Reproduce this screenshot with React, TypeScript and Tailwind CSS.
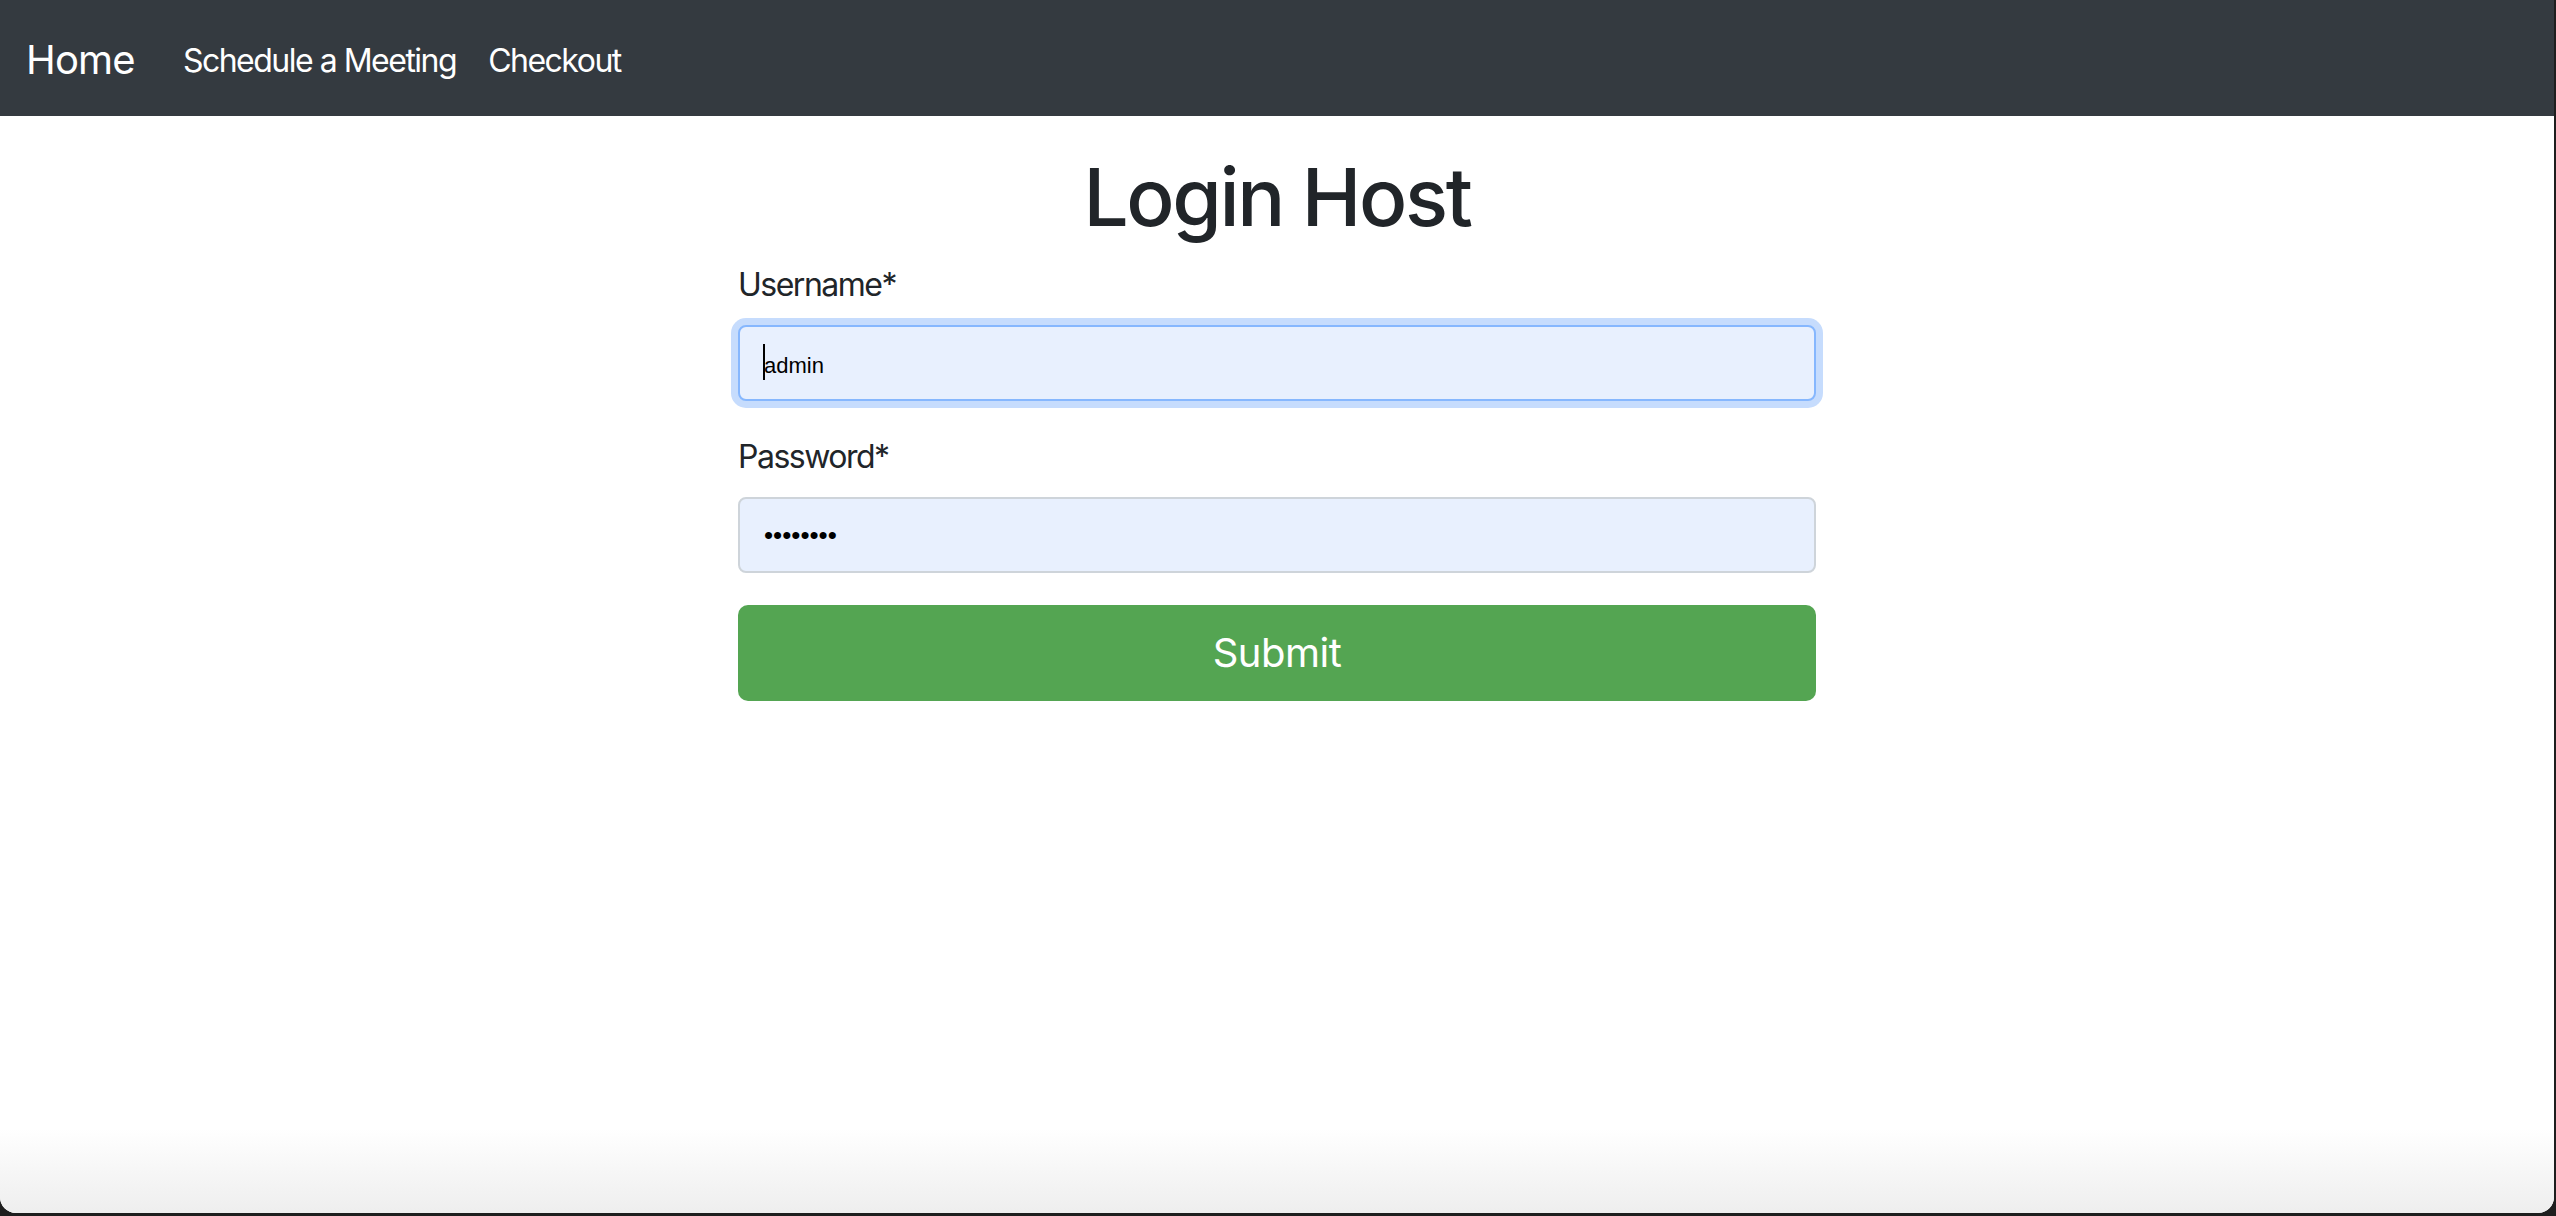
import React from 'react';

const App: React.FC = () => {
  return (
    <div className="h-[1216px] w-full bg-[#1e1e1e] pr-[2px] pb-[3px]">
      <div className="relative flex h-full flex-col overflow-hidden rounded-b-[16px] bg-white font-['Inter',sans-serif] text-[#212529]">
        {/* navbar */}
        <nav className="flex h-[116px] shrink-0 items-center bg-[#343a40] px-[26px]">
          <div className="flex items-center text-white">
            <a href="#" className="mr-[32px] pt-[4px] text-[40px] leading-[60px] tracking-[-0.8px]">Home</a>
            <a href="#" className="px-4 pt-[6px] text-[32px] leading-[48px] tracking-[-1.5px]">Schedule a Meeting</a>
            <a href="#" className="px-4 pt-[6px] text-[32px] leading-[48px] tracking-[-1.5px]">Checkout</a>
          </div>
        </nav>

        <main className="mx-auto w-[1078px]">
          <h1 className="mt-[33px] mb-4 text-center text-[80px] leading-[96px] font-medium tracking-[-2.4px]">Login Host</h1>

          <form onSubmit={(e) => e.preventDefault()}>
            <div className="mb-8">
              <label className="mb-4 block text-[32px] leading-[48px] tracking-[-1.5px]">Username*</label>
              <div className="relative">
                <input
                  type="text"
                  defaultValue="admin"
                  className="h-[76px] w-full rounded-[8px] border-2 border-[#86b7fe] bg-[#e8f0fe] px-[24px] pt-[5px] font-['Liberation_Sans',Arial,sans-serif] text-[22px] text-black shadow-[0_0_0_7px_#c6dcfd] outline-none"
                />
                <span className="absolute top-[19px] left-[25px] h-[36px] w-[2px] bg-black" />
              </div>
            </div>

            <div className="mb-8">
              <label className="mb-4 block text-[32px] leading-[48px] tracking-[-1.5px]">Password*</label>
              <input
                type="password"
                defaultValue="password"
                className="h-[76px] w-full rounded-[8px] border-2 border-[#ced4da] bg-[#e8f0fe] px-[24px] font-['Liberation_Sans',Arial,sans-serif] text-[26px] text-black outline-none"
              />
            </div>

            <button
              type="submit"
              className="h-[96px] w-full rounded-[10px] bg-[#54a552] text-[40px] leading-[60px] tracking-[-0.5px] text-white"
            >
              Submit
            </button>
          </form>
        </main>

        <div className="mt-auto h-[84px] bg-linear-to-b from-white to-[#eeeeee]" />
      </div>
    </div>
  );
};

export default App;
